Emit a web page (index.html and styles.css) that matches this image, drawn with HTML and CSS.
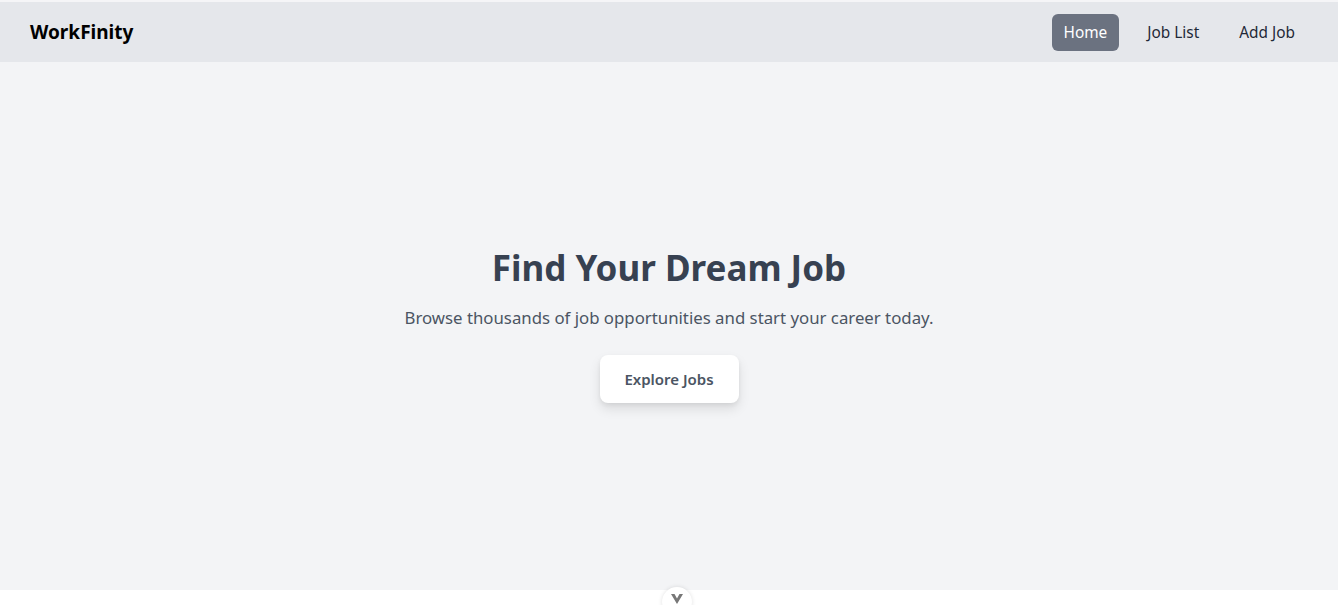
FILE: index.html
```html
<!DOCTYPE html>
<html>
<head>
<meta charset="utf-8">
<link rel="stylesheet" href="styles.css">
</head>
<body>
<header class="navbar">
  <div class="brand">WorkFinity</div>
  <nav class="nav">
    <a class="nav-link active">Home</a>
    <a class="nav-link">Job List</a>
    <a class="nav-link">Add Job</a>
  </nav>
</header>
<section class="hero">
  <h1 class="hero-title">Find Your Dream Job</h1>
  <p class="hero-sub">Browse thousands of job opportunities and start your career today.</p>
  <button class="hero-btn">Explore Jobs</button>
</section>
<div class="below">
  <div class="scroll-btn">
    <svg width="14" height="10" viewBox="0 0 14 10"><path d="M1 0 L7 10 L13 0 L9.5 0 L7 4.5 L4.5 0 Z" fill="#777"/></svg>
  </div>
</div>
</body>
</html>
```
FILE: styles.css
```css
* { box-sizing: border-box; }
html, body { margin: 0; padding: 0; }
body {
  font-family: "Noto Sans", "Open Sans", sans-serif;
  background: #ffffff;
  border-top: 2px solid #f5f5f7;
  overflow: hidden;
}
.navbar {
  height: 60px;
  background: #e5e7eb;
  display: flex;
  align-items: center;
  justify-content: space-between;
  padding: 0 31px 0 30px;
}
.brand {
  font-size: 19px;
  font-weight: 700;
  color: #000;
}
.nav { display: flex; align-items: center; gap: 16px; }
.nav-link {
  font-size: 15.4px;
  color: #1f2937;
  padding: 7px 12px;
  border-radius: 6px;
  line-height: 22px;
  position: relative;
  top: 1px;
}
.nav-link.active {
  background: #6b7280;
  color: #fff;
  top: 0;
  padding: 8px 12px 7px;
}
.hero {
  height: 528px;
  background: #f3f4f6;
  display: flex;
  flex-direction: column;
  align-items: center;
  justify-content: center;
  padding-bottom: 4px;
}
.hero-title {
  margin: 0;
  font-size: 35px;
  font-weight: 700;
  color: #374151;
  line-height: 44px;
}
.hero-sub {
  margin: 15px 0 0;
  font-size: 16.8px;
  color: #4b5563;
  line-height: 26px;
}
.hero-btn {
  margin-top: 24px;
  font-family: inherit;
  font-size: 15px;
  font-weight: 600;
  color: #4b5563;
  background: #fff;
  border: none;
  border-radius: 8px;
  width: 139px;
  height: 48px;
  box-shadow: 0 6px 12px rgba(0,0,0,0.1), 0 2px 4px rgba(0,0,0,0.06);
}
.below {
  height: 20px;
  display: flex;
  justify-content: center;
  position: relative;
}
.scroll-btn {
  position: absolute;
  top: -3px;
  left: 662px;
  width: 30px;
  height: 30px;
  border-radius: 50%;
  background: #fff;
  box-shadow: 0 0 4px rgba(0,0,0,0.12);
  display: flex;
  justify-content: center;
  padding-top: 7px;
}
```
